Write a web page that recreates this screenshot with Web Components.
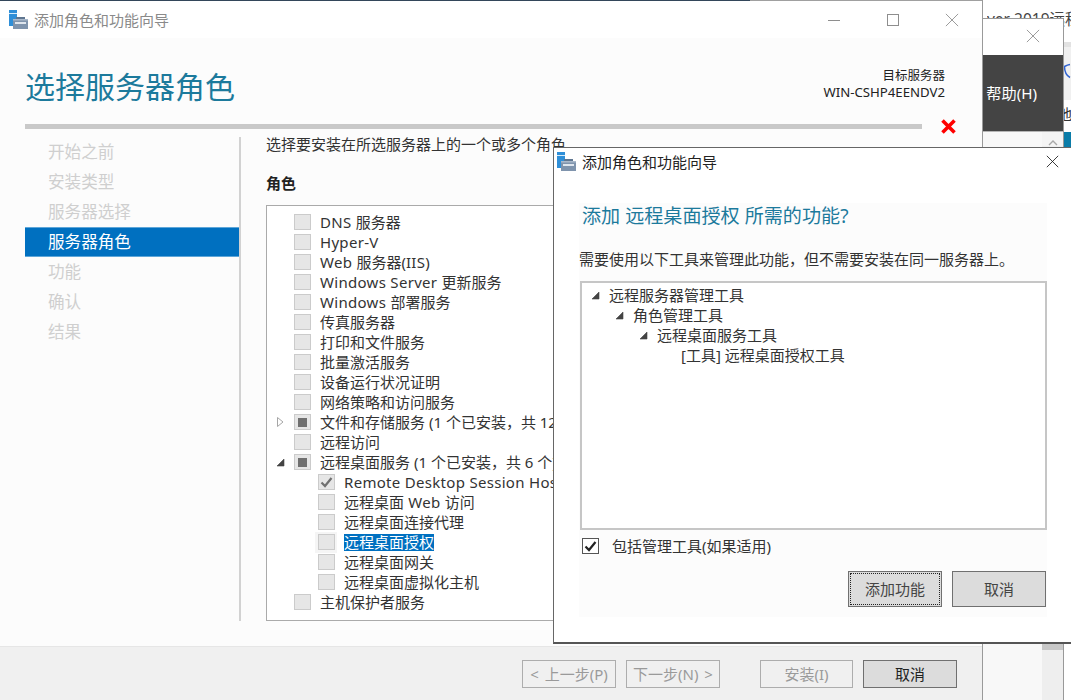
<!DOCTYPE html>
<html lang="zh"><head><meta charset="utf-8"><title>添加角色和功能向导</title>
<style>
html,body{margin:0;padding:0;height:100%;overflow:hidden;background:#fff}
body{font:15px/20px "Noto Sans","Noto Sans CJK SC",sans-serif;color:#333}
.l{letter-spacing:.3px}
</style></head>
<body>
<wiz-desktop>
  <back-window></back-window>
  <wizard-window>
    <wiz-nav slot="nav"></wiz-nav>
    <role-list slot="roles">
      <role-row><span class="l">DNS </span>服务器</role-row>
      <role-row><span class="l">Hyper-V</span></role-row>
      <role-row><span class="l">Web </span>服务器(<span class="l">IIS</span>)</role-row>
      <role-row><span class="l">Windows Server </span>更新服务</role-row>
      <role-row><span class="l">Windows </span>部署服务</role-row>
      <role-row>传真服务器</role-row>
      <role-row>打印和文件服务</role-row>
      <role-row>批量激活服务</role-row>
      <role-row>设备运行状况证明</role-row>
      <role-row>网络策略和访问服务</role-row>
      <role-row state="partial" expander="closed">文件和存储服务 (1 个已安装&#xFF0C;共 12 个)</role-row>
      <role-row>远程访问</role-row>
      <role-row state="partial" expander="open">远程桌面服务 (1 个已安装&#xFF0C;共 6 个)</role-row>
      <role-row level="1" state="checked"><span class="l">Remote Desktop Session Host</span></role-row>
      <role-row level="1">远程桌面<span class="l"> Web </span>访问</role-row>
      <role-row level="1">远程桌面连接代理</role-row>
      <role-row level="1" selected>远程桌面授权</role-row>
      <role-row level="1">远程桌面网关</role-row>
      <role-row level="1">远程桌面虚拟化主机</role-row>
      <role-row>主机保护者服务</role-row>
    </role-list>
  </wizard-window>
  <feature-dialog></feature-dialog>
</wiz-desktop>
<script>
const ICON=`<svg width="20" height="20" viewBox="0 0 20 20" aria-hidden="true"><rect x="0" y="0" width="8" height="16" fill="#2f8fd8"/><rect x="0" y="3" width="8" height="1" fill="#d6ecfb"/><rect x="4" y="9" width="15" height="10" fill="#7f94ad"/><rect x="4" y="9" width="15" height="1.5" fill="#a9b8ca"/><rect x="7" y="7" width="9" height="2" fill="#5f7690"/><rect x="6" y="12" width="11" height="2" fill="#dfe6ee"/></svg>`;
const X=(c,s=16)=>`<svg width="${s}" height="${s}" viewBox="0 0 16 16" aria-hidden="true"><path d="M1 1L15 15M15 1L1 15" stroke="${c}" stroke-width="1" fill="none"/></svg>`;
function def(name,html,setup){
  customElements.define(name,class extends HTMLElement{
    constructor(){super();this.attachShadow({mode:'open'}).innerHTML=html;}
    connectedCallback(){if(setup)setup.call(this,this.shadowRoot);}
  });
}
def('wiz-desktop',`<style>:host{display:block;position:relative;width:1071px;height:700px;overflow:hidden;background:#fff}</style><slot></slot>`);

def('wiz-button',`<style>
:host{display:flex;align-items:center;justify-content:center;box-sizing:border-box;width:94px;height:28px;border:1px solid #adadad;background:#f0f0f0;color:#9a9a9a;font-size:15px;white-space:nowrap;word-spacing:2px}
:host([primary]){background:#dcdcdc;border-color:#707070;color:#222}
:host([dlg]){height:36px;width:94px;color:#444}
:host([focus]){outline:1px dotted #222;outline-offset:-3px}
</style><slot></slot>`);

def('back-window',`<style>
:host{position:absolute;left:900px;top:0;width:171px;height:700px;display:block;overflow:hidden}
.strip{position:absolute;left:87px;top:11px;font-size:15.5px;line-height:16px;color:#444;white-space:nowrap;width:84px;overflow:hidden}
.side{position:absolute;left:163px;top:0;width:8px;height:700px;display:flex;flex-direction:column;overflow:hidden;background:#fff}
.side>div{flex:none;overflow:hidden}
.a{height:42px}
.b{height:5px;background:#e2e2e2}
.c2{height:53px;background:#f0f0f0;display:flex;align-items:center;padding-bottom:6px;box-sizing:border-box}
.e{height:32px;line-height:28px;font-size:15px;color:#333;white-space:nowrap;text-indent:-6px}
.f{height:15px;background:#0a7ca8}
.win{position:absolute;left:0;top:18px;width:164px;height:682px;box-sizing:border-box;border:1px solid #999;border-bottom:0;background:#f8f8f8;display:flex;flex-direction:column}
.t{height:36px;background:#fff;display:flex;justify-content:flex-end;align-items:flex-start;padding:10px 23px 0 0;box-sizing:border-box;flex:none}
.d{height:77px;background:#444;color:#fff;flex:none;display:flex;justify-content:flex-end;align-items:center;box-sizing:border-box;padding-right:26px;border-bottom:1px solid #b5b5b5;font-size:15.2px}
.c{flex:1;display:flex;justify-content:flex-end}
.sb{width:21px;background:#eee;display:flex;flex-direction:column}
.sb i{display:flex;justify-content:center;align-items:flex-end;height:14px;margin-bottom:497px;background:#f4f4f4}
.sb b{display:block;height:7px;background:#c8c8c8}
</style>
<div class="side">
  <div class="a"></div><div class="b"></div>
  <div class="c2"><svg width="8" height="16" viewBox="0 0 8 16" aria-hidden="true"><path d="M7 1.5C4 2 2.5 3 1.5 3.5C1.5 8 2.5 12 7 14.5" fill="none" stroke="#2f62d0" stroke-width="1.5"/></svg></div>
  <div class="e">地</div><div class="f"></div>
</div>
<div class="strip">ver 2019远程桌面</div>
<div class="win">
  <div class="t">${X('#8e8e8e',14)}</div>
  <div class="d">帮助(H)</div>
  <div class="c"><div class="sb"><i><svg width="10" height="6" viewBox="0 0 10 6" aria-hidden="true"><path d="M1 5L5 1L9 5" fill="none" stroke="#a8a8a8" stroke-width="1.4"/></svg></i><b></b></div></div>
</div>`);

def('wiz-nav',`<style>
:host{display:block;box-sizing:border-box;width:216px;height:484px;margin-left:25px;border-right:2px solid #d2d2d2;font-size:16.6px}
div{height:30px;line-height:30px;padding-left:23px;color:#cfcfcf;width:214px;box-sizing:border-box}
div.on{background:#0070c0;color:#fff;border-top:1px solid #5ea6d8;border-bottom:1px solid #5ea6d8;line-height:28px}
</style>
<div>开始之前</div><div>安装类型</div><div>服务器选择</div><div class="on">服务器角色</div><div>功能</div><div>确认</div><div>结果</div>`);

def('role-list',`<style>
:host{display:block;box-sizing:border-box;height:416px;border:1px solid #aaa;background:#fff;padding-top:6px;overflow:hidden;width:690px}
</style><slot></slot>`);

def('role-row',`<style>
:host{display:flex;align-items:center;height:20px;white-space:nowrap;color:#333;padding-left:27px}
:host([level="1"]){padding-left:51px}
.exp{width:27px;margin-left:-27px;height:20px;position:relative;flex:none;display:flex;align-items:center;justify-content:center}
.box{width:17px;height:16px;box-sizing:border-box;border:1px solid #cbcbcb;background:#e6e6e6;flex:none;display:flex;align-items:center;justify-content:center}
.txt{margin-left:9px}
:host([selected]) .wrap{background:#f5f5f5;margin:-2px -2px -2px -3px;padding:2px 2px 2px 3px;height:17px;display:flex;align-items:center}
:host([selected]) .txt{background:#0070c0;color:#fff;margin-left:9px;line-height:17px}
.wrap{display:flex;align-items:center}
</style><span class="exp" id="e"></span><span class="wrap"><span class="box" id="b"></span></span><span class="txt"><slot></slot></span>`,function(r){
  const st=this.getAttribute('state'),ex=this.getAttribute('expander');
  const b=r.getElementById('b'),e=r.getElementById('e');
  if(st==='partial')b.innerHTML='<svg width="9" height="9" aria-hidden="true"><rect width="9" height="9" fill="#707070"/></svg>';
  if(st==='checked')b.innerHTML='<svg width="13" height="12" viewBox="0 0 13 12" aria-hidden="true"><path d="M1.5 6.5L5 10L11.5 2" stroke="#707070" stroke-width="2.2" fill="none"/></svg>';
  if(ex==='closed')e.innerHTML='<svg width="9" height="12" viewBox="0 0 9 12" aria-hidden="true"><path d="M1.5 1.5L7 6L1.5 10.5Z" fill="#fff" stroke="#a6a6a6"/></svg>';
  if(ex==='open')e.innerHTML='<svg width="9" height="9" viewBox="0 0 9 9" aria-hidden="true"><path d="M8 1V8H1Z" fill="#444" stroke="#444" stroke-width=".6"/></svg>';
  if(this.getAttribute('level')==='1'){e.style.display='none';}
});

def('wizard-window',`<style>
:host{position:absolute;left:0;top:0;width:983px;height:700px;box-sizing:border-box;display:flex;flex-direction:column;background:#fcfcfc;border-right:1px solid #9a9a9a}
.top{height:1px;flex:none;background:linear-gradient(90deg,#33465a 750px,#a0a0a0 750px)}
.tb{height:37px;background:#fff;display:flex;align-items:center;padding-left:9px;flex:none;color:#8a8a8a}
.tb span{margin-left:5px}
.ctl{margin-left:auto;display:flex;align-items:center;margin-right:1px}
.ctl>*{display:flex;width:59px;justify-content:center;align-items:center;height:20px}
.head{height:86px;flex:none;display:flex;justify-content:space-between;box-sizing:border-box;padding:0 37px 0 25px}
h1{margin:0;font-weight:400;font-size:30px;line-height:40px;color:#1c7a9c;padding-top:29px}
.tgt{text-align:right;color:#222;line-height:16px;padding-top:30px;font-size:13.2px}
.tgt b{font-weight:400;font-size:12.5px;display:block;height:16px}
.tgt i{font-style:normal;display:block;height:16px}
.prog{height:5px;flex:none;margin-left:25px;width:897px;background:#c9c9c9;position:relative}
.rx{position:absolute;left:916px;top:-5px;width:15px;height:15px}
.main{height:517px;flex:none;display:flex;padding-top:8px;box-sizing:border-box;overflow:hidden}
.right{margin:-1px 0 0 25px;display:flex;flex-direction:column}
.lead{line-height:16px;color:#333;white-space:nowrap}
.rl{font-weight:700;line-height:20px;margin:21px 0 12px;color:#222}
.foot{flex:1;background:#f0f0f0;border-top:1px solid #e6e6e6;display:flex;align-items:flex-start;padding:13px 0 0 522px}
.foot>*{flex:none}
</style>
<div class="top"></div>
<div class="tb">${ICON}<span>添加角色和功能向导</span>
  <div class="ctl"><div><svg width="12" height="12" aria-hidden="true"><path d="M0 6.5H12" stroke="#8e8e8e"/></svg></div><div><svg width="12" height="12" aria-hidden="true"><rect x=".5" y=".5" width="11" height="11" fill="none" stroke="#8e8e8e"/></svg></div><div>${X('#8e8e8e',14)}</div></div>
</div>
<div class="head"><h1>选择服务器角色</h1><div class="tgt"><b>目标服务器</b><i>WIN-CSHP4EENDV2</i></div></div>
<div class="prog"><svg class="rx" viewBox="0 0 15 15" aria-hidden="true"><path d="M1.5 1.5L13.5 13.5M13.5 1.5L1.5 13.5" stroke="#f00" stroke-width="3.6" fill="none"/></svg></div>
<div class="main"><slot name="nav"></slot><div class="right"><div class="lead">选择要安装在所选服务器上的一个或多个角色。</div><div class="rl">角色</div><slot name="roles"></slot></div></div>
<div class="foot"><wiz-button>&lt; 上一步(P)</wiz-button><wiz-button style="margin-left:10px">下一步(N) &gt;</wiz-button><wiz-button style="margin-left:40px;width:93px">安装(I)</wiz-button><wiz-button primary style="margin-left:10px">取消</wiz-button></div>`);

def('tree-row',`<style>
:host{display:flex;align-items:center;height:20px;color:#333;white-space:nowrap}
.t{width:9px;height:9px;margin-right:9px;flex:none;display:block}
</style><svg class="t" id="t" viewBox="0 0 9 9" aria-hidden="true"><path d="M8 1V8H1Z" fill="#444" stroke="#444" stroke-width=".6"/></svg><slot></slot>`,function(r){
  if(this.hasAttribute('leaf'))r.getElementById('t').style.visibility='hidden';
  this.style.paddingLeft=(+this.getAttribute('indent')||0)+'px';
});

def('feature-dialog',`<style>
:host{position:absolute;left:553px;top:147px;width:530px;height:497px;box-sizing:border-box;display:flex;flex-direction:column;background:#fff;border:1px solid #666;border-bottom:2px solid #555;border-right:0}
.tb{height:27px;flex:none;display:flex;align-items:center;padding:0 0 0 3px;color:#222;position:relative}
.tb span{margin-left:5px}
.cl{position:absolute;left:492px;top:7px;line-height:0}
.panel{margin:28px 0 0 25px;width:468px;height:414px;background:#fcfcfc;display:flex;flex-direction:column;flex:none}
h2{margin:0;font-weight:400;font-size:19.1px;line-height:26px;color:#1c7a9c;padding:0 0 0 3px;white-space:nowrap}
p{margin:20px 0 0;line-height:20px;color:#333;white-space:nowrap}
.tree{box-sizing:border-box;margin:12px 0 0 1px;height:249px;width:467px;border:2px solid #c6c6c6;background:#fff;padding:2px 0 0 9px}
.chk{display:flex;align-items:center;height:20px;margin:6px 0 0 3px;color:#333}
.cb{width:17px;height:16px;box-sizing:border-box;border:1px solid #555;background:#fff;margin-right:13px;display:flex;align-items:center;justify-content:center}
.btns{display:flex;justify-content:flex-end;gap:10px;margin:15px 1px 0 0}
</style>
<div class="tb">${ICON}<span>添加角色和功能向导</span><div class="cl">${X('#111',13)}</div></div>
<div class="panel">
<h2>添加 远程桌面授权 所需的功能?</h2>
<p>需要使用以下工具来管理此功能&#xFF0C;但不需要安装在同一服务器上。</p>
<div class="tree"><tree-row>远程服务器管理工具</tree-row><tree-row indent="24">角色管理工具</tree-row><tree-row indent="48">远程桌面服务工具</tree-row><tree-row indent="72" leaf>[工具] 远程桌面授权工具</tree-row></div>
<div class="chk"><span class="cb"><svg width="13" height="12" viewBox="0 0 13 12" aria-hidden="true"><path d="M1.5 6.5L5 10L11.5 2" stroke="#222" stroke-width="2.2" fill="none"/></svg></span>包括管理工具(如果适用)</div>
<div class="btns"><wiz-button primary dlg focus>添加功能</wiz-button><wiz-button primary dlg>取消</wiz-button></div>
</div>`);
</script>
</body></html>
